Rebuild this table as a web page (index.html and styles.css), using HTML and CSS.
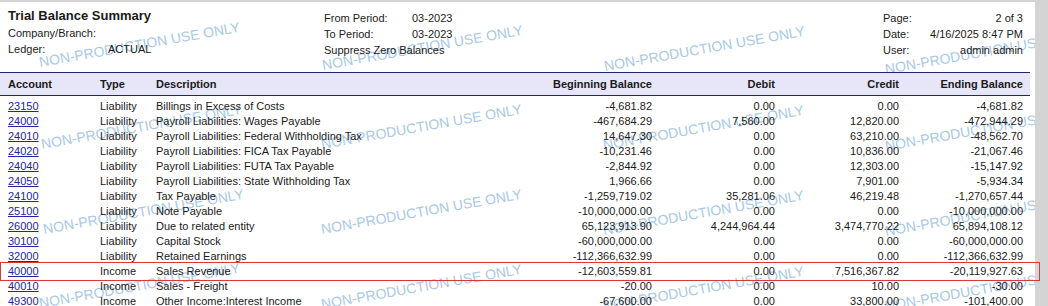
FILE: index.html
```html
<!DOCTYPE html>
<html lang="en">
<head>
<meta charset="utf-8">
<title>Trial Balance Summary</title>
<link rel="stylesheet" href="styles.css">
</head>
<body>
<div class="page">
  <div class="watermarks" aria-hidden="true">
    <span class="wm" style="left:40px;top:53px">NON-PRODUCTION USE ONLY</span>
    <span class="wm" style="left:323px;top:56px">NON-PRODUCTION USE ONLY</span>
    <span class="wm" style="left:605px;top:57px">NON-PRODUCTION USE ONLY</span>
    <span class="wm" style="left:886px;top:60px">NON-PRODUCTION USE ONLY</span>
    <span class="wm" style="left:42px;top:135px">NON-PRODUCTION USE ONLY</span>
    <span class="wm" style="left:322px;top:135px">NON-PRODUCTION USE ONLY</span>
    <span class="wm" style="left:604px;top:136px">NON-PRODUCTION USE ONLY</span>
    <span class="wm" style="left:886px;top:137px">NON-PRODUCTION USE ONLY</span>
    <span class="wm" style="left:44px;top:220px">NON-PRODUCTION USE ONLY</span>
    <span class="wm" style="left:322px;top:220px">NON-PRODUCTION USE ONLY</span>
    <span class="wm" style="left:604px;top:221px">NON-PRODUCTION USE ONLY</span>
    <span class="wm" style="left:886px;top:222px">NON-PRODUCTION USE ONLY</span>
    <span class="wm" style="left:40px;top:294px">NON-PRODUCTION USE ONLY</span>
    <span class="wm" style="left:322px;top:295px">NON-PRODUCTION USE ONLY</span>
    <span class="wm" style="left:604px;top:297px">NON-PRODUCTION USE ONLY</span>
    <span class="wm" style="left:886px;top:297px">NON-PRODUCTION USE ONLY</span>
  </div>

  <header class="report-head">
    <div class="head-left">
      <h1 class="title">Trial Balance Summary</h1>
      <div class="kv kv-left"><span>Company/Branch:</span><span></span></div>
      <div class="kv kv-left"><span>Ledger:</span><span>ACTUAL</span></div>
    </div>
    <div class="head-mid">
      <div class="kv kv-mid"><span>From Period:</span><span>03-2023</span></div>
      <div class="kv kv-mid"><span>To Period:</span><span>03-2023</span></div>
      <div class="line">Suppress Zero Balances</div>
    </div>
    <div class="head-right">
      <div class="kv kv-right"><span>Page:</span><span>2 of 3</span></div>
      <div class="kv kv-right"><span>Date:</span><span>4/16/2025 8:47 PM</span></div>
      <div class="kv kv-right"><span>User:</span><span>admin admin</span></div>
    </div>
  </header>

  <div class="grid-table">
    <div class="row head-row">
      <div>Account</div><div>Type</div><div>Description</div>
      <div class="num">Beginning Balance</div><div class="num">Debit</div><div class="num">Credit</div><div class="num">Ending Balance</div>
    </div>
    <div class="body">
      <div class="row"><a href="#">23150</a><div>Liability</div><div>Billings in Excess of Costs</div><div class="num">-4,681.82</div><div class="num">0.00</div><div class="num">0.00</div><div class="num">-4,681.82</div></div>
      <div class="row"><a href="#">24000</a><div>Liability</div><div>Payroll Liabilities: Wages Payable</div><div class="num">-467,684.29</div><div class="num">7,560.00</div><div class="num">12,820.00</div><div class="num">-472,944.29</div></div>
      <div class="row"><a href="#">24010</a><div>Liability</div><div>Payroll Liabilities: Federal Withholding Tax</div><div class="num">14,647.30</div><div class="num">0.00</div><div class="num">63,210.00</div><div class="num">-48,562.70</div></div>
      <div class="row"><a href="#">24020</a><div>Liability</div><div>Payroll Liabilities: FICA Tax Payable</div><div class="num">-10,231.46</div><div class="num">0.00</div><div class="num">10,836.00</div><div class="num">-21,067.46</div></div>
      <div class="row"><a href="#">24040</a><div>Liability</div><div>Payroll Liabilities: FUTA Tax Payable</div><div class="num">-2,844.92</div><div class="num">0.00</div><div class="num">12,303.00</div><div class="num">-15,147.92</div></div>
      <div class="row"><a href="#">24050</a><div>Liability</div><div>Payroll Liabilities: State Withholding Tax</div><div class="num">1,966.66</div><div class="num">0.00</div><div class="num">7,901.00</div><div class="num">-5,934.34</div></div>
      <div class="row"><a href="#">24100</a><div>Liability</div><div>Tax Payable</div><div class="num">-1,259,719.02</div><div class="num">35,281.06</div><div class="num">46,219.48</div><div class="num">-1,270,657.44</div></div>
      <div class="row"><a href="#">25100</a><div>Liability</div><div>Note Payable</div><div class="num">-10,000,000.00</div><div class="num">0.00</div><div class="num">0.00</div><div class="num">-10,000,000.00</div></div>
      <div class="row"><a href="#">26000</a><div>Liability</div><div>Due to related entity</div><div class="num">65,123,913.90</div><div class="num">4,244,964.44</div><div class="num">3,474,770.22</div><div class="num">65,894,108.12</div></div>
      <div class="row"><a href="#">30100</a><div>Liability</div><div>Capital Stock</div><div class="num">-60,000,000.00</div><div class="num">0.00</div><div class="num">0.00</div><div class="num">-60,000,000.00</div></div>
      <div class="row"><a href="#">32000</a><div>Liability</div><div>Retained Earnings</div><div class="num">-112,366,632.99</div><div class="num">0.00</div><div class="num">0.00</div><div class="num">-112,366,632.99</div></div>
      <div class="row highlight"><a href="#">40000</a><div>Income</div><div>Sales Revenue</div><div class="num">-12,603,559.81</div><div class="num">0.00</div><div class="num">7,516,367.82</div><div class="num">-20,119,927.63</div></div>
      <div class="row"><a href="#">40010</a><div>Income</div><div>Sales - Freight</div><div class="num">-20.00</div><div class="num">0.00</div><div class="num">10.00</div><div class="num">-30.00</div></div>
      <div class="row"><a href="#">49300</a><div>Income</div><div>Other Income:Interest Income</div><div class="num">-67,600.00</div><div class="num">0.00</div><div class="num">33,800.00</div><div class="num">-101,400.00</div></div>
    </div>
  </div>
</div>
</body>
</html>
```

FILE: styles.css
```css
html, body {
  margin: 0;
  padding: 0;
}
body {
  background: #d4d4d4;
  font-family: "Liberation Sans", Arial, sans-serif;
  font-size: 11px;
  color: #1a1a1a;
  padding-top: 2px;
  overflow: hidden;
}
.page {
  position: relative;
  isolation: isolate;
  width: 1035px;
  height: 304px;
  background: #ffffff;
}
.watermarks {
  position: absolute;
  inset: 0;
  overflow: hidden;
  z-index: -1;
}
.wm {
  position: absolute;
  font-size: 14px;
  line-height: 14px;
  white-space: nowrap;
  color: #a8c9e6;
  transform-origin: 0 12px;
  transform: rotate(-10deg);
}

/* report header */
.report-head {
  display: flex;
  align-items: flex-start;
  height: 70px;
  box-sizing: border-box;
}
.head-left {
  width: 316px;
  padding: 5px 0 0 8px;
}
.title {
  margin: 0;
  font-size: 13px;
  line-height: 18px;
  font-weight: bold;
}
.head-mid {
  width: 559px;
  padding-top: 8px;
}
.head-right {
  width: 140px;
  padding-top: 8px;
}
.kv {
  display: grid;
  line-height: 16px;
}
.kv-left { grid-template-columns: 100px auto; }
.kv-mid { grid-template-columns: 88px auto; }
.kv-right { grid-template-columns: 40px 1fr; }
.kv-right span:last-child { text-align: right; }
.line { line-height: 16px; }

/* table */
.grid-table {
  width: 1030px;
}
.row {
  display: grid;
  grid-template-columns: 92px 56px 372px 124px 123px 124px 124px;
  padding: 0 7px 0 8px;
  height: 15px;
  line-height: 15px;
  white-space: nowrap;
}
.head-row {
  height: 22px;
  line-height: 22px;
  background: #e6e6f8;
  border-top: 1px solid #25256a;
  border-bottom: 1px solid #25256a;
  font-weight: bold;
}
.body {
  padding-top: 3px;
}
.num {
  text-align: right;
}
.row a {
  color: #2323a8;
  text-decoration: underline;
}
.highlight {
  position: relative;
}
.highlight::after {
  content: "";
  position: absolute;
  left: 0;
  right: -10px;
  top: -2px;
  bottom: -2px;
  border: 1px solid #d23b3b;
  pointer-events: none;
}
```
